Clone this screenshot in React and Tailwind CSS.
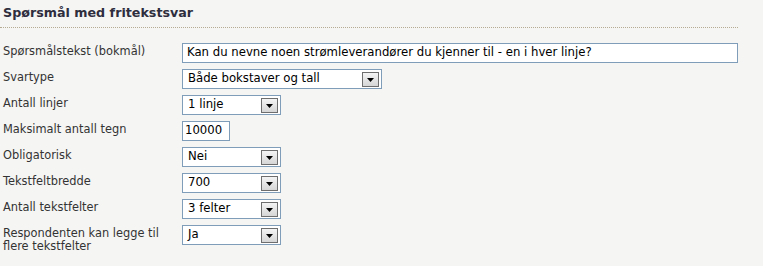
import React from "react";

const font = { fontFamily: "Verdana, 'DejaVu Sans', sans-serif" };

function Arrow() {
  return (
    <div className="ml-auto mr-[2px] w-[17px] h-[15px] border border-[#6e6e6e] bg-gradient-to-b from-[#f4f4f4] to-[#d6d6d6] flex items-end justify-center pb-[4px]">
      <svg width="7" height="4" viewBox="0 0 7 4">
        <polygon points="0,0 7,0 3.5,4" fill="#000" />
      </svg>
    </div>
  );
}

function Select({ value, w }) {
  return (
    <div className={`${w} h-[20px] border border-[#7f9db9] bg-white flex items-center pl-[5px] text-[11.7px] text-black`}>
      <span>{value}</span>
      <Arrow />
    </div>
  );
}

function Row({ label, children }) {
  return (
    <div className="flex items-start">
      <div className="w-[182px] shrink-0 pl-[3px] pt-[2px] text-[11.4px] leading-[13px] text-[#333]">{label}</div>
      {children}
    </div>
  );
}

export default function App() {
  return (
    <div className="w-[763px] h-[266px] bg-[#f5f5f3] overflow-hidden" style={font}>
      <div className="w-[738px]">
        <div className="pl-[3px] pt-[5px] pb-[6px] text-[12.7px] leading-[16px] font-bold text-[#2e2e3e] border-b border-dotted border-[#b5aa92]">
          Spørsmål med fritekstsvar
        </div>
      </div>
      <div className="pt-[15px] flex flex-col gap-[6px]">
        <Row label="Spørsmålstekst (bokmål)">
          <div className="w-[556px] h-[20px] border border-[#7f9db9] bg-white flex items-center pl-[4px] text-[11.7px] text-black">
            Kan du nevne noen strømleverandører du kjenner til - en i hver linje?
          </div>
        </Row>
        <Row label="Svartype">
          <Select value="Både bokstaver og tall" w="w-[200px]" />
        </Row>
        <Row label="Antall linjer">
          <Select value="1 linje" w="w-[99px]" />
        </Row>
        <Row label="Maksimalt antall tegn">
          <div className="w-[48px] h-[20px] border border-[#7f9db9] bg-white flex items-center pl-[2px] text-[11.7px] text-black">
            10000
          </div>
        </Row>
        <Row label="Obligatorisk">
          <Select value="Nei" w="w-[99px]" />
        </Row>
        <Row label="Tekstfeltbredde">
          <Select value="700" w="w-[99px]" />
        </Row>
        <Row label="Antall tekstfelter">
          <Select value="3 felter" w="w-[99px]" />
        </Row>
        <Row label={<>Respondenten kan legge til<br />flere tekstfelter</>}>
          <Select value="Ja" w="w-[99px]" />
        </Row>
      </div>
    </div>
  );
}
